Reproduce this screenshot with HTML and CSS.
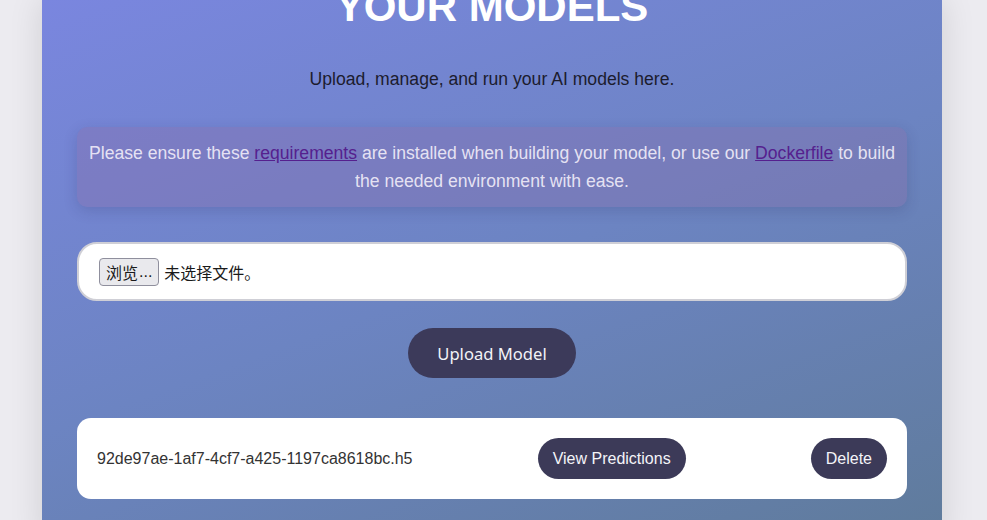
FILE: index.html
```html
<!DOCTYPE html>
<html lang="en">
<head>
<meta charset="utf-8">
<title>Your Models</title>
<link rel="stylesheet" href="styles.css">
</head>
<body>
<main class="container">
  <h1 class="title">YOUR MODELS</h1>
  <p class="subtitle">Upload, manage, and run your AI models here.</p>
  <div class="notice">
    Please ensure these <a class="link" href="#requirements">requirements</a> are installed when building your model, or use our <a class="link" href="#dockerfile">Dockerfile</a> to build the needed environment with ease.
  </div>
  <form class="upload-form">
    <label class="file-field">
      <span class="file-btn">浏览<span class="dots">...</span></span>
      <span class="file-status">未选择文件。</span>
    </label>
    <button type="button" class="upload-btn">Upload Model</button>
  </form>
  <ul class="model-list">
    <li class="model-card">
      <span class="model-name">92de97ae-1af7-4cf7-a425-1197ca8618bc.h5</span>
      <button type="button" class="pill-btn">View Predictions</button>
      <button type="button" class="pill-btn">Delete</button>
    </li>
  </ul>
</main>
</body>
</html>
```
FILE: styles.css
```css
html, body {
  margin: 0;
  padding: 0;
}
body {
  background: #ecebf0;
  font-family: "Liberation Sans", Arial, sans-serif;
  overflow: hidden;
}
.container {
  width: 900px;
  min-height: 540px;
  margin: 0 0 0 42px;
  padding: 0 35px;
  box-sizing: border-box;
  background: linear-gradient(160deg, #7a86df 0%, #6c84c2 50%, #5f7b9b 100%);
  box-shadow: 0 0 32px rgba(0, 0, 0, 0.12);
  display: flex;
  flex-direction: column;
}
.title {
  margin: -17px 0 0;
  font-size: 42px;
  line-height: 48px;
  font-weight: 700;
  color: #ffffff;
  text-align: center;
}
.subtitle {
  margin: 36px 0 0;
  font-size: 17.6px;
  line-height: 24px;
  color: #1c1c2e;
  text-align: center;
}
.notice {
  margin-top: 36px;
  padding: 12px 10px;
  border-radius: 10px;
  background: rgba(138, 110, 170, 0.35);
  box-shadow: 0 4px 14px rgba(40, 40, 90, 0.18);
  color: rgba(244, 240, 250, 0.9);
  font-size: 17.6px;
  line-height: 28px;
  text-align: center;
}
.link {
  color: #55208e;
  text-decoration: underline;
}
.upload-form {
  margin-top: 35px;
  display: flex;
  flex-direction: column;
  align-items: center;
}
.file-field {
  align-self: stretch;
  display: flex;
  align-items: center;
  gap: 5px;
  height: 28px;
  padding: 14px 20px 13px;
  background: #ffffff;
  border: 2px solid #cfcfd6;
  border-radius: 20px;
  font-family: "Noto Sans CJK SC", sans-serif;
  font-size: 16px;
  color: #1a1a1a;
}
.file-btn {
  display: inline-flex;
  align-items: center;
  height: 26px;
  padding: 0 6px;
  background: #e9e9ed;
  border: 1px solid #8f8f9d;
  border-radius: 4px;
  font-size: 16px;
}
.dots {
  font-family: "Liberation Sans", Arial, sans-serif;
  margin-left: 1px;
}
.file-status {
  font-size: 16px;
}
.upload-btn {
  margin-top: 27px;
  width: 168px;
  height: 50px;
  border: none;
  border-radius: 25px;
  background: #3c3a5a;
  color: #f2f2f7;
  font-family: "Noto Sans", sans-serif;
  font-size: 16.6px;
  cursor: pointer;
}
.model-list {
  list-style: none;
  margin: 40px 0 0;
  padding: 0;
}
.model-card {
  display: flex;
  align-items: center;
  justify-content: space-between;
  padding: 20px;
  background: #ffffff;
  border-radius: 14px;
}
.model-name {
  font-size: 16px;
  color: #333333;
}
.pill-btn {
  padding: 11px 15px;
  border: none;
  border-radius: 21px;
  background: #3c3a58;
  color: #f4f4f8;
  font-family: "Liberation Sans", Arial, sans-serif;
  font-size: 16px;
  line-height: 19px;
  cursor: pointer;
}
```
